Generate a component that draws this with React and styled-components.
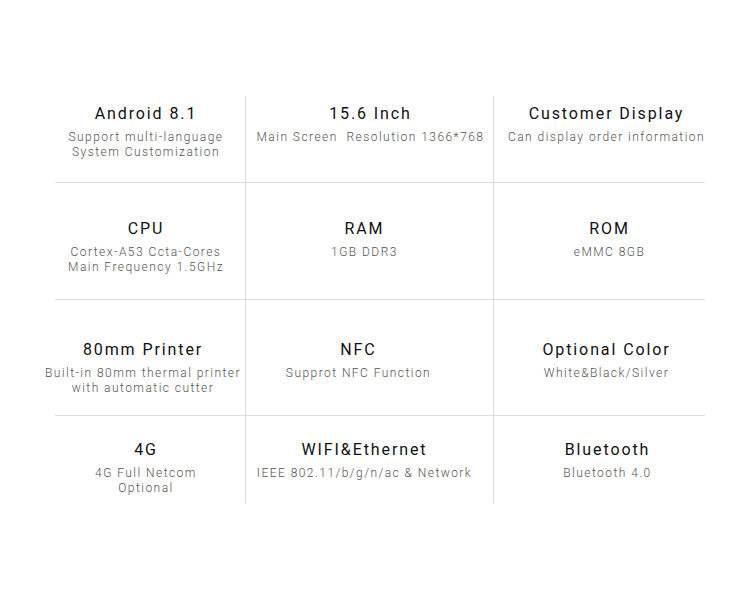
import React from 'react';
import styled, { createGlobalStyle } from 'styled-components';

const GlobalStyle = createGlobalStyle`
  body {
    margin: 0;
    background: #fff;
    font-family: Roboto, "Liberation Sans", sans-serif;
  }
`;

const Page = styled.div`
  width: 750px;
  height: 600px;
  padding-top: 96px;
  box-sizing: border-box;
`;

const Grid = styled.div`
  margin-left: 55px;
  width: 650px;
  display: grid;
  grid-template-columns: 191px 248px 211px;
`;

const Cell = styled.div`
  height: ${p => p.$h}px;
  box-sizing: border-box;
  padding-top: ${p => p.$pt}px;
  display: flex;
  flex-direction: column;
  align-items: center;
  border-bottom: ${p => (p.$last ? 'none' : '1px solid #dcdcdc')};
  border-right: ${p => (p.$edge ? 'none' : '1px solid #dcdcdc')};
`;

const Body = styled.div`
  display: flex;
  flex-direction: column;
  align-items: center;
  margin-left: ${p => p.$dx * 2}px;
`;

const Title = styled.div`
  font-size: 16px;
  line-height: 20px;
  font-weight: 400;
  letter-spacing: 1.9px;
  color: #111;
  white-space: nowrap;
`;

const Desc = styled.div`
  margin-top: 6px;
  font-size: 12px;
  line-height: 15px;
  font-weight: 300;
  letter-spacing: 1.45px;
  color: #555;
  text-align: center;
  white-space: nowrap;
`;

const rows = [
  { h: 87, pt: 8 },
  { h: 117, pt: 36 },
  { h: 116, pt: 40 },
  { h: 87, pt: 24 },
];

const colShift = [-4, -5, 8];

const items = [
  ['Android 8.1', ['Support multi-language', 'System Customization'], 0],
  ['15.6 Inch', ['Main Screen\u00a0 Resolution 1366*768'], 6],
  ['Customer Display', ['Can display order information'], -1],
  ['CPU', ['Cortex-A53 Ccta-Cores', 'Main Frequency 1.5GHz'], 0],
  ['RAM', ['1GB DDR3'], 0],
  ['ROM', ['eMMC 8GB'], 2],
  ['80mm Printer', ['Built-in 80mm thermal printer', 'with automatic cutter'], -3],
  ['NFC', ['Supprot NFC Function'], -6],
  ['Optional Color', ['White&Black/Silver'], -1],
  ['4G', ['4G Full Netcom', 'Optional'], 0],
  ['WIFI&Ethernet', ['IEEE 802.11/b/g/n/ac & Network'], 0],
  ['Bluetooth', ['Bluetooth 4.0'], 0],
];

const SpecCell = ({ title, lines, row, col, dx }) => (
  <Cell $h={rows[row].h} $pt={rows[row].pt} $last={row === 3} $edge={col === 2}>
    <Body $dx={colShift[col] + dx}>
      <Title>{title}</Title>
      <Desc>
        {lines.map((l, i) => (
          <div key={i}>{l}</div>
        ))}
      </Desc>
    </Body>
  </Cell>
);

export default function App() {
  return (
    <Page>
      <GlobalStyle />
      <Grid>
        {items.map(([title, lines, dx], i) => (
          <SpecCell
            key={i}
            title={title}
            lines={lines}
            dx={dx}
            row={Math.floor(i / 3)}
            col={i % 3}
          />
        ))}
      </Grid>
    </Page>
  );
}
